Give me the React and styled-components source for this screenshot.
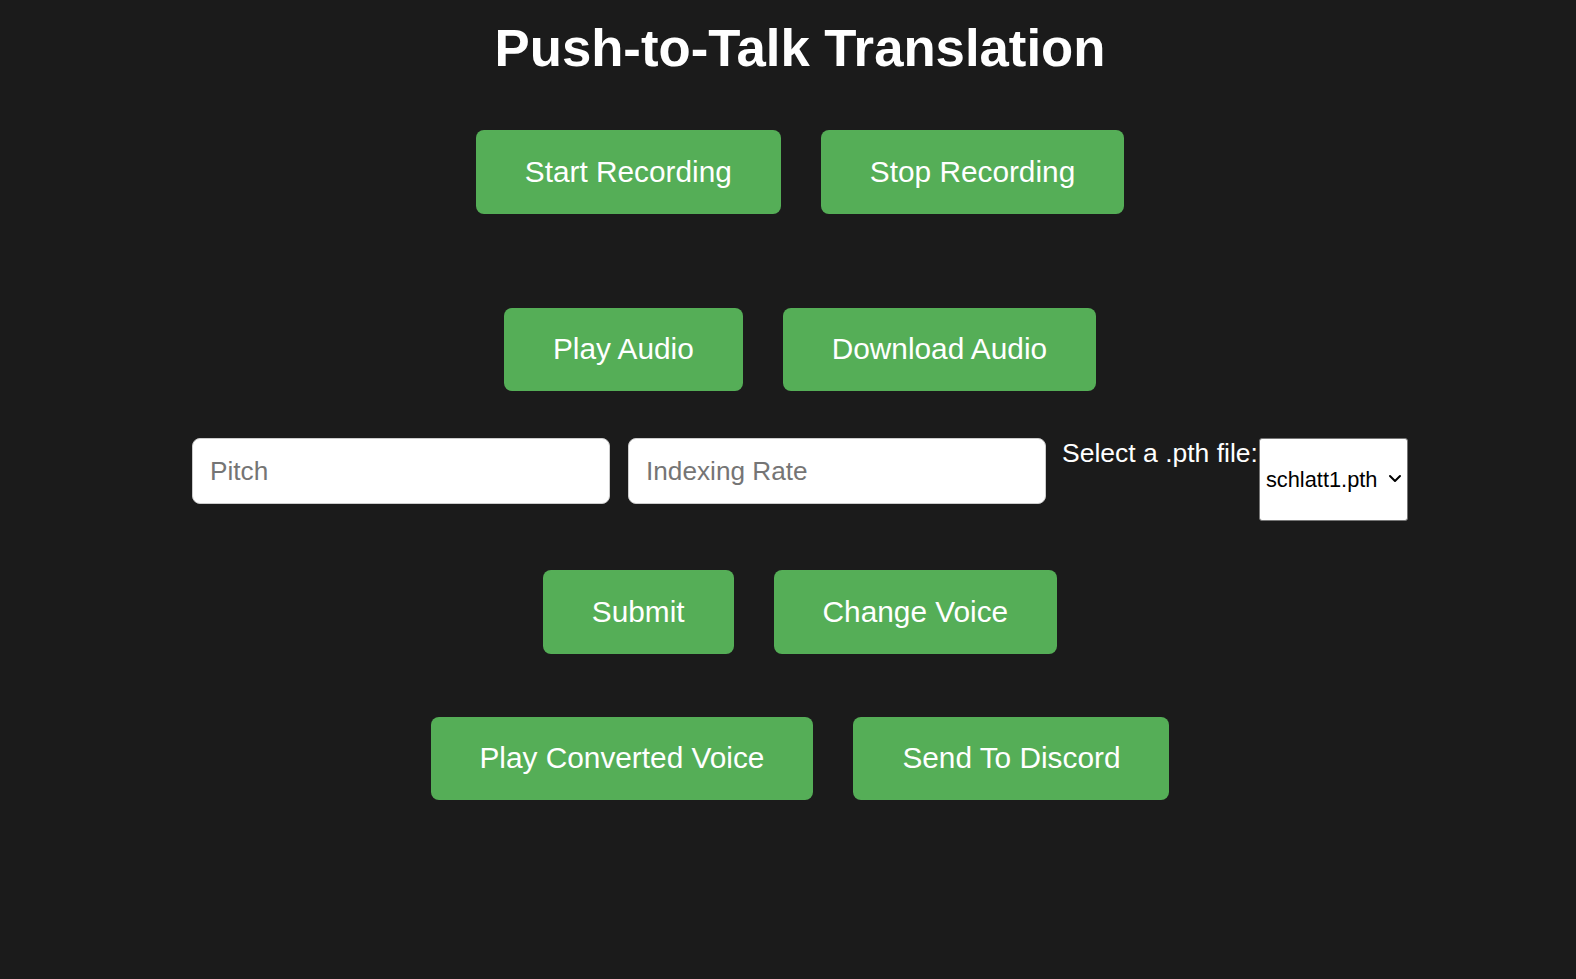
import React from "react";
import styled, { createGlobalStyle } from "styled-components";

const GlobalStyle = createGlobalStyle`
  html, body {
    margin: 0;
    padding: 0;
    background: #1b1b1b;
    font-family: "Liberation Sans", Arial, sans-serif;
  }
  * { box-sizing: border-box; }
`;

const Page = styled.div`
  min-height: 979px;
  display: flex;
  flex-direction: column;
  align-items: center;
  padding-left: 24px;
  background: #1b1b1b;
`;

const Title = styled.h1`
  margin: 17px 0 0;
  font-size: 52.7px;
  line-height: normal;
  font-weight: 700;
  color: #ffffff;
`;

const ButtonRow = styled.div`
  display: flex;
  gap: 40px;
  margin-top: ${(p) => p.$top}px;
`;

const Button = styled.button`
  height: 83.5px;
  padding: 0 49px;
  border: none;
  border-radius: 8px;
  background: #55ae57;
  color: #ffffff;
  font-family: "Liberation Sans", Arial, sans-serif;
  font-size: 29.8px;
  line-height: normal;
  white-space: nowrap;
  cursor: pointer;
`;

const InputRow = styled.div`
  display: flex;
  align-items: flex-start;
  margin-top: 47px;
`;

const TextInput = styled.input`
  width: 418px;
  height: 66px;
  margin-right: 18px;
  padding: 0 17px;
  border: 1px solid #cccccc;
  border-radius: 8px;
  background: #ffffff;
  font-family: "Liberation Sans", Arial, sans-serif;
  font-size: 26.2px;
  color: #222;
  outline: none;
  &::placeholder { color: #757575; }
  &:last-of-type { margin-right: 16px; }
`;

const Label = styled.label`
  font-size: 26.5px;
  line-height: normal;
  color: #ffffff;
  margin-right: 1px;
  white-space: nowrap;
`;

const SelectWrap = styled.div`
  position: relative;
  width: 149px;
  height: 83px;
`;

const Select = styled.select`
  appearance: none;
  -webkit-appearance: none;
  width: 100%;
  height: 100%;
  padding: 0 24px 0 6px;
  border: 1px solid #767676;
  border-radius: 3px;
  background: #ffffff;
  color: #000000;
  font-family: "Liberation Sans", Arial, sans-serif;
  font-size: 21.8px;
  outline: none;
`;

const Chevron = styled.svg`
  position: absolute;
  right: 6px;
  top: 36px;
  width: 14px;
  height: 9px;
  pointer-events: none;
`;

export default function App() {
  return (
    <>
      <GlobalStyle />
      <Page>
        <Title>Push-to-Talk Translation</Title>
        <ButtonRow $top={52}>
          <Button>Start Recording</Button>
          <Button>Stop Recording</Button>
        </ButtonRow>
        <ButtonRow $top={94}>
          <Button>Play Audio</Button>
          <Button>Download Audio</Button>
        </ButtonRow>
        <InputRow>
          <TextInput placeholder="Pitch" />
          <TextInput placeholder="Indexing Rate" />
          <Label htmlFor="pth">Select a .pth file:</Label>
          <SelectWrap>
            <Select id="pth" defaultValue="schlatt1.pth">
              <option value="schlatt1.pth">schlatt1.pth</option>
            </Select>
            <Chevron viewBox="0 0 14 9">
              <path d="M2 2 L7 7 L12 2" fill="none" stroke="#000" strokeWidth="2" strokeLinecap="round" strokeLinejoin="round" />
            </Chevron>
          </SelectWrap>
        </InputRow>
        <ButtonRow $top={49}>
          <Button>Submit</Button>
          <Button>Change Voice</Button>
        </ButtonRow>
        <ButtonRow $top={63}>
          <Button>Play Converted Voice</Button>
          <Button>Send To Discord</Button>
        </ButtonRow>
      </Page>
    </>
  );
}
